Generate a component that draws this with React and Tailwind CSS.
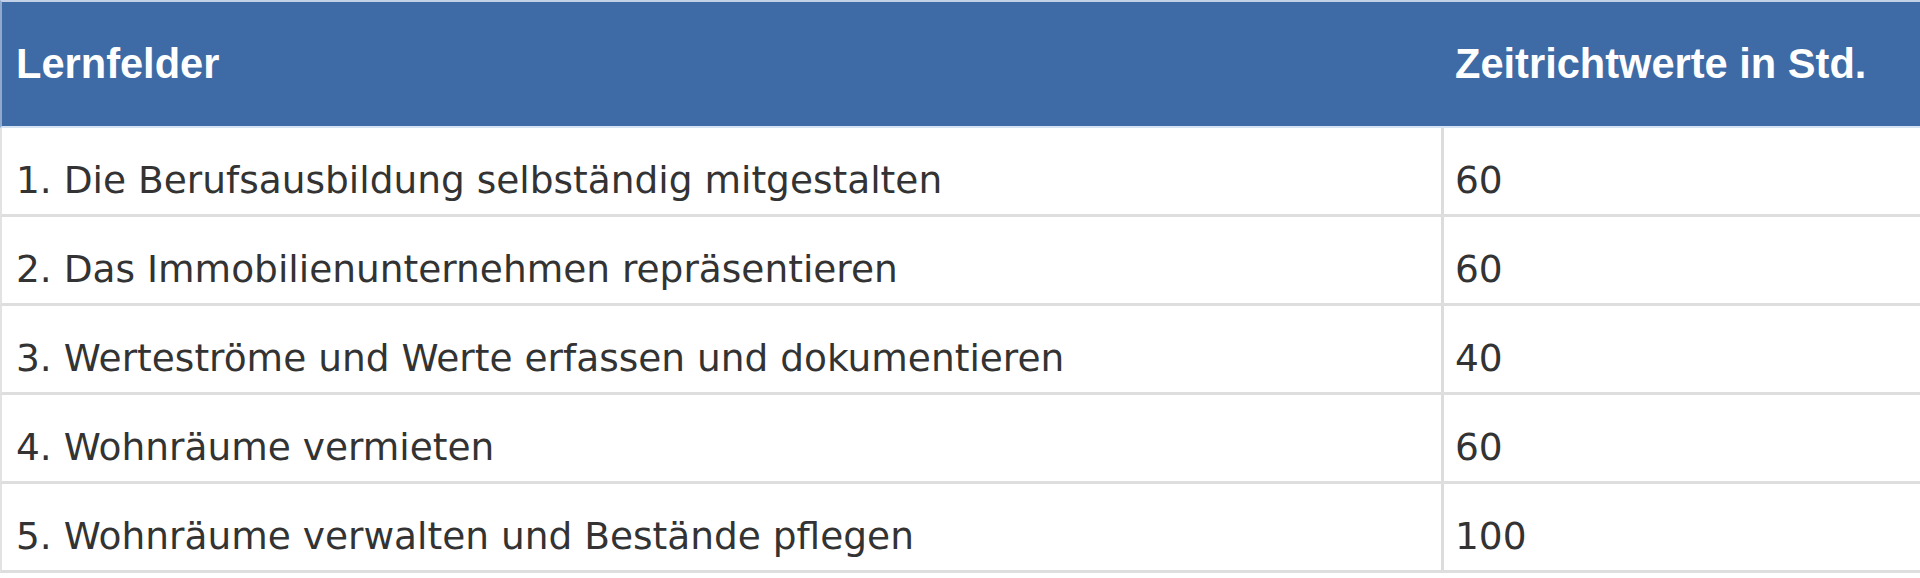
export default function App() {
  const rows = [
    ["1. Die Berufsausbildung selbständig mitgestalten", "60"],
    ["2. Das Immobilienunternehmen repräsentieren", "60"],
    ["3. Werteströme und Werte erfassen und dokumentieren", "40"],
    ["4. Wohnräume vermieten", "60"],
    ["5. Wohnräume verwalten und Bestände pflegen", "100"],
  ];
  return (
    <div className="w-[1920px] h-[578px] bg-white overflow-hidden">
      <div className="flex h-[128px] bg-[#3e6ba5] border-t-2 border-b-2 border-t-[#c3d1e8] border-b-[#d6e3f2] border-l-2 border-l-[#8fa9cf] text-white font-bold text-[41.6px] leading-none" style={{ fontFamily: '"Liberation Sans", Arial, sans-serif' }}>
        <div className="w-[1439px] flex items-center pl-[14px]">Lernfelder</div>
        <div className="flex-1 flex items-center pl-[14px]">Zeitrichtwerte in Std.</div>
      </div>
      {rows.map(([a, b]) => (
        <div key={a} className="flex h-[89px] border-b-[3px] border-[#dedede] border-l-2 border-l-[#e2e2e2] text-[37.5px] leading-none text-[#333333]" style={{ fontFamily: '"DejaVu Sans", Verdana, sans-serif' }}>
          <div className="w-[1439px] flex items-center pl-[14px] pt-[19px]">{a}</div>
          <div className="flex-1 flex items-center pl-[11px] pt-[19px] border-l-[3px] border-[#dcdcdc]">{b}</div>
        </div>
      ))}
    </div>
  );
}
